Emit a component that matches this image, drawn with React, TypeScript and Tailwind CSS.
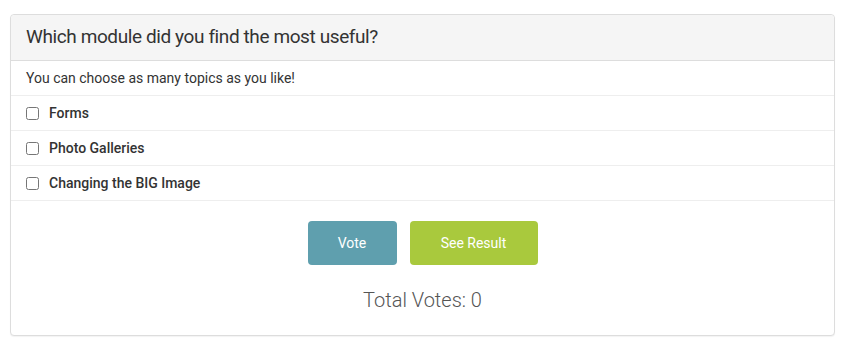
export default function App() {
  const options = ['Forms', 'Photo Galleries', 'Changing the BIG Image']

  return (
    <div className="min-h-[346px] bg-white px-[10px] pt-[14px]" style={{ fontFamily: 'Roboto, "Liberation Sans", sans-serif' }}>
      <div className="rounded-[4px] border border-[#dddddd] bg-white shadow-[0_1px_1px_rgba(0,0,0,0.05)]">
        {/* Header */}
        <div className="flex h-[46px] items-center rounded-t-[4px] border-b border-[#dddddd] bg-[#f5f5f5] px-[15px]">
          <h3 className="text-[19px] font-normal tracking-[-0.4px] text-[#333333]">Which module did you find the most useful?</h3>
        </div>

        {/* Options */}
        <div className="flex h-[35px] items-center border-b border-[#eeeeee] px-[15px] text-[14px] text-[#333333]">
          You can choose as many topics as you like!
        </div>
        {options.map((o) => (
          <label key={o} className="flex h-[35px] items-center gap-[10px] border-b border-[#eeeeee] px-[15px]">
            <input type="checkbox" className="h-[13px] w-[13px]" />
            <span className="text-[14px] font-medium text-[#333333]">{o}</span>
          </label>
        ))}

        {/* Actions */}
        <div className="flex justify-center gap-[13px] pt-[20px]">
          <button className="h-[44px] w-[89px] rounded-[4px] bg-[#5f9fae] text-[14px] text-white">Vote</button>
          <button className="h-[44px] w-[128px] rounded-[4px] bg-[#a9c93d] text-[14px] text-white">See Result</button>
        </div>
        <div className="pb-[20px] pt-[20px] text-center text-[20px] font-light text-[#555555]">Total Votes: 0</div>
      </div>
    </div>
  )
}
